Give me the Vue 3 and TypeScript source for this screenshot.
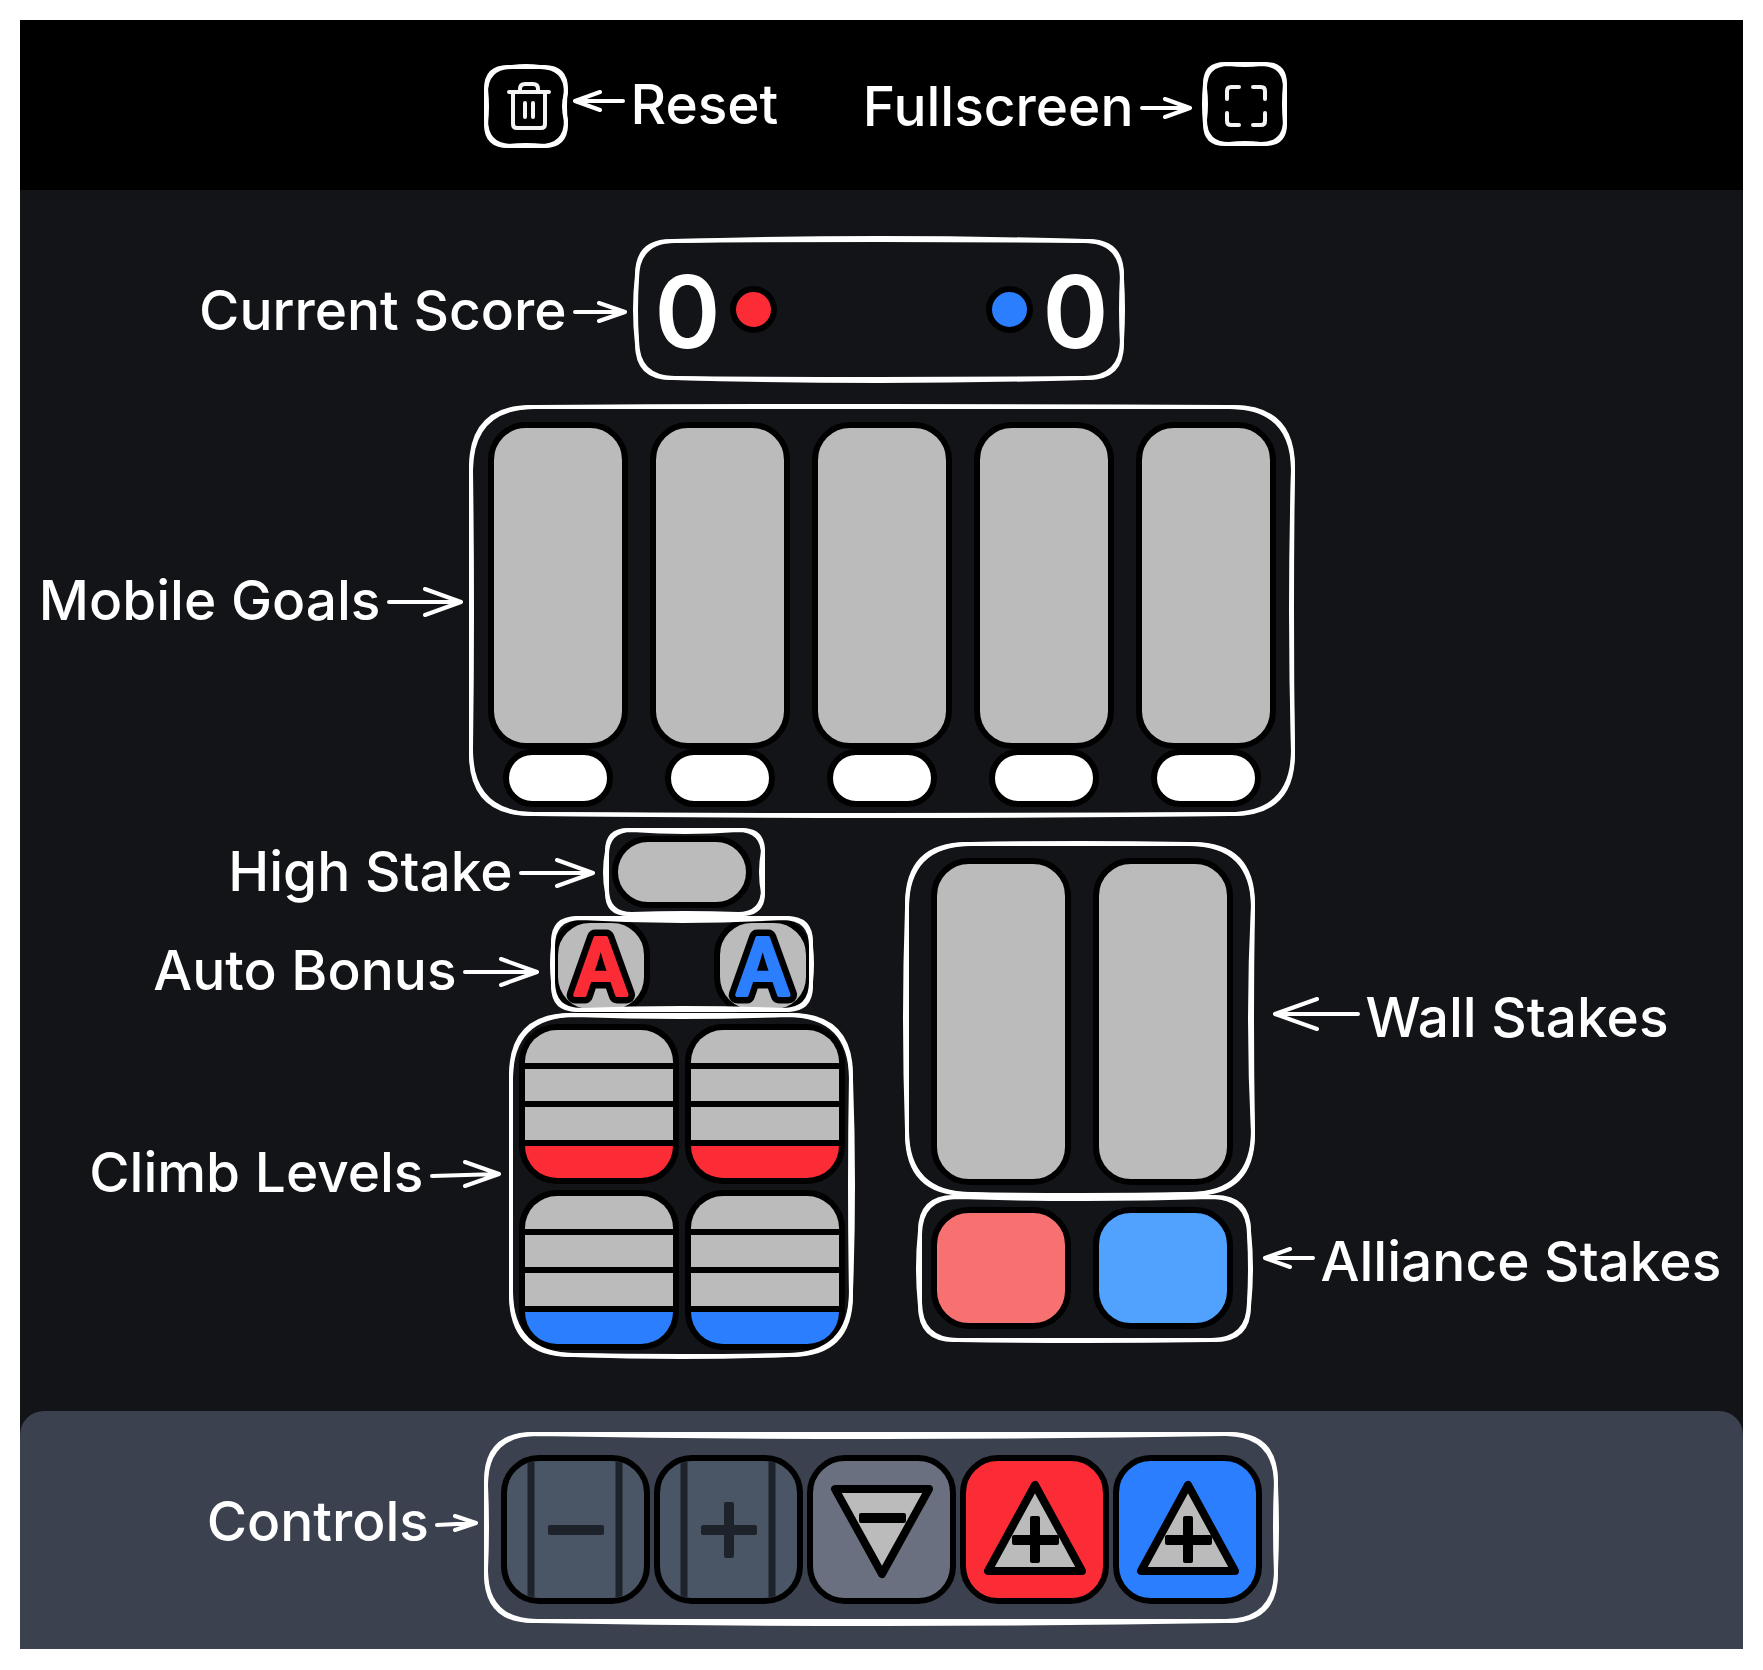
<script setup lang="ts">
import { h, ref } from 'vue'
import type { FunctionalComponent } from 'vue'

type Bulge = [number, number, number, number]

interface NoteProps {
  label: string
  side: 'left' | 'right'
  box: [number, number, number, number]
  radius: number
  first: Bulge
  second: Bulge
  arrowY: number
  arrowLength: number
  gap: number
  tilt?: number
}

const PAD = 8

/* One pass of a hand-drawn rounded rectangle; each side bows outward by its bulge. */
function sketch(w: number, hgt: number, r: number, [t, ri, b, l]: Bulge): string {
  const x0 = PAD
  const y0 = PAD
  const x1 = PAD + w
  const y1 = PAD + hgt
  const mx = PAD + w / 2
  const my = PAD + hgt / 2
  return [
    `M${x0 + r} ${y0}`,
    `Q${mx} ${y0 - t * 2} ${x1 - r} ${y0}`,
    `Q${x1} ${y0} ${x1} ${y0 + r}`,
    `Q${x1 + ri * 2} ${my} ${x1} ${y1 - r}`,
    `Q${x1} ${y1} ${x1 - r} ${y1}`,
    `Q${mx} ${y1 + b * 2} ${x0 + r} ${y1}`,
    `Q${x0} ${y1} ${x0} ${y1 - r}`,
    `Q${x0 - l * 2} ${my} ${x0} ${y0 + r}`,
    `Q${x0} ${y0} ${x0 + r} ${y0}`,
  ].join(' ')
}

function arrowPath(len: number, side: 'left' | 'right', tilt: number): string {
  const tip = side === 'left' ? len - 2 : 2
  const tail = side === 'left' ? 2 : len - 2
  const dir = side === 'left' ? -1 : 1
  const back = Math.round(len * 0.48)
  const wing = Math.round(len * 0.17)
  const wx = tip + dir * back
  return `M${tail} ${20 + tilt} L${tip} 20 M${wx} ${20 - wing} L${tip} 20 L${wx} ${20 + wing}`
}

const Note: FunctionalComponent<NoteProps> = (p) => {
  const [x, y, w, hgt] = p.box
  const text = h('span', { class: 'note-text' }, p.label)
  const arrow = h(
    'svg',
    { class: 'note-arrow', width: p.arrowLength, height: 40, viewBox: `0 0 ${p.arrowLength} 40`, 'aria-hidden': 'true' },
    [h('path', { d: arrowPath(p.arrowLength, p.side, p.tilt ?? 0) })],
  )
  return h(
    'div',
    { class: 'note', style: { left: `${x}px`, top: `${y}px`, width: `${w}px`, height: `${hgt}px` } },
    [
      h(
        'svg',
        {
          class: 'note-outline',
          width: w + PAD * 2,
          height: hgt + PAD * 2,
          viewBox: `0 0 ${w + PAD * 2} ${hgt + PAD * 2}`,
          'aria-hidden': 'true',
        },
        [
          h('path', { d: sketch(w, hgt, p.radius, p.first) }),
          h('path', { d: sketch(w, hgt, p.radius + 4, p.second) }),
        ],
      ),
      h(
        'div',
        {
          class: ['note-callout', `note-${p.side}`],
          style: {
            top: `${p.arrowY}px`,
            [p.side === 'left' ? 'right' : 'left']: `${w + p.gap}px`,
          },
        },
        p.side === 'left' ? [text, arrow] : [arrow, text],
      ),
    ],
  )
}
Note.props = ['label', 'side', 'box', 'radius', 'first', 'second', 'arrowY', 'arrowLength', 'gap', 'tilt']

const redScore = ref(0)
const blueScore = ref(0)
const goals = [1, 2, 3, 4, 5]
const climbers = ['red', 'red', 'blue', 'blue']
const rungs = [1, 2, 3, 4]
</script>

<template>
  <div class="page">
    <div class="app">
      <header class="toolbar">
        <div class="toolbar-inner">
          <div class="group">
            <button type="button" class="tool" aria-label="Reset">
              <svg width="48" height="52" viewBox="-1 -1 48 52" fill="none" stroke="#f4f4f4" stroke-width="4" stroke-linecap="round" stroke-linejoin="round">
                <path d="M4 12H44M8 12V44Q8 48 12 48H36Q40 48 40 44V12M15 12V9Q15 4 20 4H28Q33 4 33 9V12M20 23V37M28 23V37" />
              </svg>
            </button>
            <Note label="Reset" side="right" :box="[0, 2, 80, 79]" :radius="22" :first="[0, -1, -1, -1]" :second="[1, -2, 0, 0]" :arrow-y="34" :arrow-length="52" :gap="7" />
          </div>
          <div class="group">
            <button type="button" class="tool" aria-label="Fullscreen">
              <svg width="48" height="48" viewBox="2 -1 48 48" fill="none" stroke="#f4f4f4" stroke-width="4" stroke-linecap="round" stroke-linejoin="round">
                <path d="M5 17V9Q5 5 9 5H17M31 5H39Q43 5 43 9V17M43 31V39Q43 43 39 43H31M17 43H9Q5 43 5 39V31" />
              </svg>
            </button>
            <Note label="Fullscreen" side="left" :box="[-1, -1, 80, 80]" :radius="20" :first="[0, -1, 0, 1]" :second="[-1, 0, -1, -1]" :arrow-y="44" :arrow-length="52" :gap="13" />
          </div>
        </div>
      </header>

      <main class="field">
        <section class="group score" aria-label="Current Score">
          <div class="side">
            <output class="points">{{ redScore }}</output>
            <span class="dot red"></span>
          </div>
          <div class="side">
            <span class="dot blue"></span>
            <output class="points">{{ blueScore }}</output>
          </div>
          <Note label="Current Score" side="left" :box="[-2, 1, 485, 137]" :radius="34" :first="[1, -1, 1, 2]" :second="[3, 1, 3, 1]" :arrow-y="71" :arrow-length="54" :gap="10" />
        </section>

        <section class="group goals" aria-label="Mobile Goals">
          <div v-for="n in goals" :key="n" class="goal">
            <button type="button" class="slot tall" :aria-label="`Mobile goal ${n}`"></button>
            <button type="button" class="slot zone" :aria-label="`Mobile goal ${n} zone`"></button>
          </div>
          <Note label="Mobile Goals" side="left" :box="[-17, -15, 822, 407]" :radius="60" :first="[0, -1, 1, 0]" :second="[1, -2, 2, -1]" :arrow-y="195" :arrow-length="76" :gap="8" />
        </section>

        <div class="lower">
          <div class="column">
            <section class="group" aria-label="High Stake">
              <button type="button" class="slot high" aria-label="High stake"></button>
              <Note label="High Stake" side="left" :box="[-5, -6, 156, 84]" :radius="21" :first="[0, -2, 0, 2]" :second="[-2, 0, -1, 0]" :arrow-y="43" :arrow-length="76" :gap="12" />
            </section>

            <section class="group autos" aria-label="Auto Bonus">
              <button v-for="c in ['red', 'blue']" :key="c" type="button" class="slot auto">
                <svg width="86" height="86" viewBox="0 0 86 86">
                  <use :href="`#auto-${c}`" class="letter-edge" />
                  <g class="ink" :class="`ink-${c}`">
                    <text :id="`auto-${c}`" class="letter" :class="`fill-${c}`" x="43" y="72" text-anchor="middle">A</text>
                  </g>
                </svg>
              </button>
              <Note label="Auto Bonus" side="left" :box="[1, 1, 258, 92]" :radius="24" :first="[0, 0, 0, 0]" :second="[-3, 1, -2, 1]" :arrow-y="54" :arrow-length="76" :gap="14" />
            </section>

            <section class="group climbs" aria-label="Climb Levels">
              <button v-for="(c, i) in climbers" :key="i" type="button" class="slot climb" :aria-label="`${c} climb level`">
                <span v-for="r in rungs" :key="r" class="rung" :class="{ [c]: r === 4 }"></span>
              </button>
              <Note label="Climb Levels" side="left" :box="[-8, -9, 340, 340]" :radius="60" :first="[0, -1, 1, 0]" :second="[-2, 2, 2, 0]" :arrow-y="159" :arrow-length="71" :gap="10" :tilt="2" />
            </section>
          </div>

          <div class="column right">
            <section class="group pair" aria-label="Wall Stakes">
              <button type="button" class="slot tall" aria-label="Wall stake 1"></button>
              <button type="button" class="slot tall" aria-label="Wall stake 2"></button>
              <Note label="Wall Stakes" side="right" :box="[-24, -14, 346, 350]" :radius="60" :first="[0, -3, 1, 0]" :second="[1, -1, 3, 2]" :arrow-y="170" :arrow-length="87" :gap="20" />
            </section>

            <section class="group pair" aria-label="Alliance Stakes">
              <button type="button" class="slot alliance soft-red" aria-label="Red alliance stake"></button>
              <button type="button" class="slot alliance soft-blue" aria-label="Blue alliance stake"></button>
              <Note label="Alliance Stakes" side="right" :box="[-11, -10, 329, 143]" :radius="34" :first="[0, 2, 0, 2]" :second="[-2, 1, 1, 0]" :arrow-y="61" :arrow-length="52" :gap="14" />
            </section>
          </div>
        </div>
      </main>

      <footer class="dock">
        <div class="group controls">
          <button type="button" class="control off" disabled aria-label="Remove">
            <svg viewBox="0 0 137 137">
              <path class="bar" d="M24 0V137M112 0V137" />
              <rect class="sign" x="41" y="64" width="56" height="10" rx="2" />
            </svg>
          </button>
          <button type="button" class="control off" disabled aria-label="Add">
            <svg viewBox="0 0 137 137">
              <path class="bar" d="M24 0V137M112 0V137" />
              <rect class="sign" x="41" y="64" width="56" height="10" rx="2" />
              <rect class="sign" x="64" y="41" width="10" height="56" rx="2" />
            </svg>
          </button>
          <button type="button" class="control neutral" aria-label="Remove ring">
            <svg viewBox="0 0 137 137">
              <path class="tri" d="M22 28H116L69 113Z" />
              <rect class="sign" x="46" y="52" width="47" height="10" rx="2" />
            </svg>
          </button>
          <button v-for="c in ['red', 'blue']" :key="c" type="button" class="control" :class="c" :aria-label="`Add ${c} ring`">
            <svg viewBox="0 0 137 137">
              <path class="tri" d="M69 24L22 110H116Z" />
              <rect class="sign" x="46" y="74" width="47" height="10" rx="2" />
              <rect class="sign" x="64" y="55" width="10" height="47" rx="2" />
            </svg>
          </button>
          <Note label="Controls" side="left" :box="[-15, -21, 790, 187]" :radius="47" :first="[0, -1, 0, 0]" :second="[-3, 1, 3, -1]" :arrow-y="89" :arrow-length="43" :gap="8" :tilt="2" />
        </div>
      </footer>
    </div>
  </div>
</template>

<style>
body {
  margin: 0;
  background: #fff;
}
</style>

<style scoped>
.page {
  padding: 20px;
  font-family: Inter, 'Noto Sans', sans-serif;
  color: #fff;
}

.app {
  background: #131418;
  overflow: hidden;
}

.group {
  position: relative;
}

button {
  display: block;
  box-sizing: border-box;
  margin: 0;
  padding: 0;
  font: inherit;
  color: inherit;
  cursor: pointer;
}

button:disabled {
  cursor: default;
}

.red {
  background: #fb2c36;
}

.blue {
  background: #2b7fff;
}

.toolbar {
  display: flex;
  justify-content: center;
  align-items: center;
  height: 170px;
  background: #000;
}

.toolbar-inner {
  display: flex;
  justify-content: space-between;
  width: 800px;
  padding-left: 8px;
}

.tool {
  display: flex;
  align-items: center;
  justify-content: center;
  width: 80px;
  height: 80px;
  padding-left: 4px;
  border: 0;
  background: none;
}

.field {
  display: flex;
  flex-direction: column;
  align-items: center;
  padding: 50px 0 61px;
}

.score {
  display: flex;
  justify-content: space-between;
  align-items: center;
  box-sizing: border-box;
  width: 486px;
  height: 138px;
  padding: 0 16px;
}

.side {
  display: flex;
  align-items: center;
  gap: 10px;
}

.points {
  padding-top: 6px;
  font-size: 100px;
  font-weight: 600;
  line-height: 100px;
}

.dot {
  box-sizing: border-box;
  width: 47px;
  height: 47px;
  border: 6px solid #000;
  border-radius: 50%;
}

.goals {
  display: flex;
  gap: 22px;
  margin-top: 44px;
}

.goal {
  display: flex;
  flex-direction: column;
  align-items: center;
}

.slot {
  border: 6px solid #000;
  border-radius: 38px;
  background-color: #bbb;
}

.tall {
  width: 140px;
  height: 327px;
}

.zone {
  width: 110px;
  height: 58px;
  border-radius: 29px;
  background: #fff;
}

.lower {
  display: grid;
  grid-template-columns: 326px 326px;
  gap: 74px;
  align-items: center;
  margin-top: 29px;
}

.column {
  display: flex;
  flex-direction: column;
  align-items: center;
  gap: 9px;
}

.column.right {
  gap: 22px;
}

.high {
  width: 140px;
  height: 72px;
}

.autos {
  display: flex;
  gap: 64px;
}

.auto {
  width: 98px;
  height: 98px;
}

.auto svg {
  display: block;
  overflow: visible;
}

.letter {
  font-size: 78px;
  font-weight: 500;
}

.fill-red {
  fill: #fb2c36;
}

.fill-blue {
  fill: #2b7fff;
}

.letter-edge {
  stroke: #000;
  stroke-width: 17px;
  stroke-linejoin: round;
}

.ink {
  stroke-width: 4px;
  stroke-linejoin: round;
}

.ink-red {
  stroke: #fb2c36;
}

.ink-blue {
  stroke: #2b7fff;
}

.climbs {
  display: grid;
  grid-template-columns: 160px 160px;
  gap: 6px;
}

.climb {
  display: grid;
  grid-template-rows: repeat(4, 1fr);
  gap: 6px;
  height: 160px;
  background: #000;
  overflow: hidden;
}

.rung {
  background-color: #bbb;
}

.rung.red {
  background-color: #fb2c36;
}

.rung.blue {
  background-color: #2b7fff;
}

.pair {
  display: flex;
  gap: 22px;
}

.alliance {
  width: 140px;
  height: 122px;
}

.slot.soft-red {
  background: #f87171;
}

.slot.soft-blue {
  background: #51a2ff;
}

.dock {
  display: flex;
  justify-content: center;
  padding: 44px 0 45px;
  border-radius: 24px 24px 0 0;
  background: #3b414e;
}

.controls {
  display: flex;
  gap: 4px;
}

.control {
  width: 149px;
  height: 149px;
  border: 6px solid #000;
  border-radius: 38px;
  overflow: hidden;
}

.control svg {
  display: block;
  width: 137px;
  height: 137px;
}

.off {
  background: #4a5565;
}

.neutral {
  background: #6a7080;
}

.bar {
  stroke: #1e222a;
  stroke-width: 7px;
}

.sign {
  fill: #000;
}

.off .sign {
  fill: #1e222a;
}

.tri {
  fill: #bbb;
  stroke: #000;
  stroke-width: 8px;
  stroke-linejoin: round;
}

.note {
  position: absolute;
  pointer-events: none;
  z-index: 1;
}

.note :deep(.note-outline) {
  position: absolute;
  top: -8px;
  left: -8px;
  fill: none;
  stroke: #fff;
  stroke-width: 4px;
}

.note :deep(.note-callout) {
  position: absolute;
  display: flex;
  align-items: center;
  gap: 6px;
  height: 60px;
  margin-top: -30px;
}

.note :deep(.note-arrow) {
  flex: none;
  fill: none;
  stroke: #fff;
  stroke-width: 4px;
  stroke-linecap: round;
  stroke-linejoin: round;
}

.note :deep(.note-text) {
  font-size: 55px;
  font-weight: 500;
  line-height: 60px;
  white-space: nowrap;
}

.note :deep(.note-left .note-text) {
  padding-bottom: 4px;
}

.note :deep(.note-right .note-text) {
  padding-top: 6px;
}
</style>
